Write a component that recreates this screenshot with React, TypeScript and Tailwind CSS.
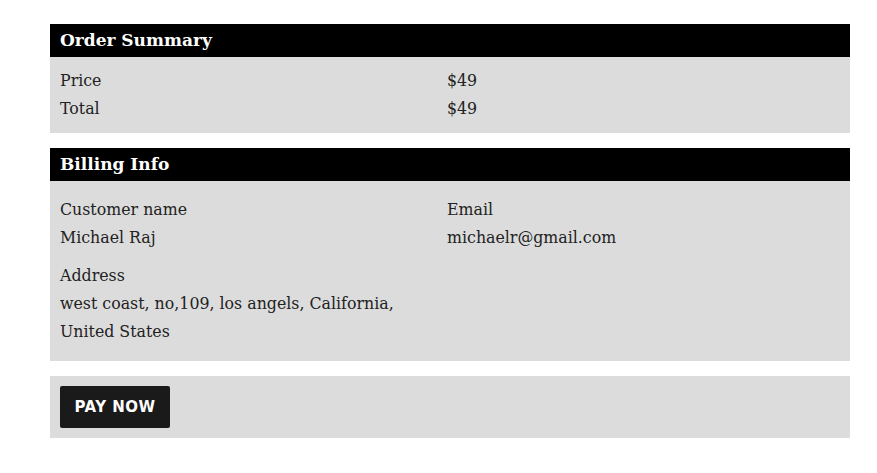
export default function App() {
  const serif = { fontFamily: '"DejaVu Serif", "Liberation Serif", serif' };
  return (
    <div className="bg-white w-[877px] h-[473px] pt-[24px] px-[50px]" style={serif}>
      <div className="w-[800px]">
        <div className="bg-black text-white h-[33px] px-[10px] flex items-center text-[17px] font-bold">Order Summary</div>
        <div className="bg-[#dcdcdc] px-[10px] pt-[10px] pb-[10px] text-[15.8px] leading-[28px] text-[#222]">
          <div className="grid grid-cols-[387px_1fr]">
            <div>Price</div>
            <div>$49</div>
            <div>Total</div>
            <div>$49</div>
          </div>
        </div>
        <div className="h-[15px]" />
        <div className="bg-black text-white h-[33px] px-[10px] flex items-center text-[17px] font-bold">Billing Info</div>
        <div className="bg-[#dcdcdc] px-[10px] pt-[15px] pb-[15px] text-[15.8px] leading-[28px] text-[#222]">
          <div className="grid grid-cols-[387px_1fr]">
            <div>
              <div>Customer name</div>
              <div>Michael Raj</div>
            </div>
            <div>
              <div>Email</div>
              <div>michaelr@gmail.com</div>
            </div>
          </div>
          <div className="mt-[10px]">
            <div>Address</div>
            <div className="w-[345px]">west coast, no,109, los angels, California, United States</div>
          </div>
        </div>
        <div className="h-[15px]" />
        <div className="bg-[#dcdcdc] p-[10px]">
          <button
            className="w-[110px] h-[42px] bg-[#1a1a1a] text-white rounded-[2px] text-[15px] font-bold tracking-[0.5px] flex items-center justify-center"
            style={{ fontFamily: '"DejaVu Sans", Inter, sans-serif' }}
          >
            PAY NOW
          </button>
        </div>
      </div>
    </div>
  );
}
